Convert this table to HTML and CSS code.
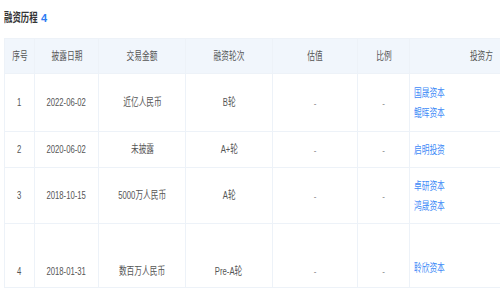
FILE: index.html
```html
<!DOCTYPE html>
<html lang="zh-CN">
  <head>
    <meta charset="UTF-8" />
    <meta name="viewport" content="width=device-width, initial-scale=1.0" />
    <title>融资历程</title>
    <link rel="stylesheet" href="styles.css">
  </head>
  <body>
    <h2 class="section-title">
      <span class="sq sq-left">融资历程</span><span class="count">4</span>
    </h2>

    <table class="finance-table">
      <colgroup>
        <col class="c-no" />
        <col class="c-date" />
        <col class="c-amount" />
        <col class="c-round" />
        <col class="c-value" />
        <col class="c-ratio" />
        <col class="c-investor" />
      </colgroup>
      <thead>
        <tr>
          <th><span class="sq">序号</span></th>
          <th><span class="sq">披露日期</span></th>
          <th><span class="sq">交易金额</span></th>
          <th><span class="sq">融资轮次</span></th>
          <th><span class="sq">估值</span></th>
          <th><span class="sq">比例</span></th>
          <th class="investors-head"><span class="sq sq-right">投资方</span></th>
        </tr>
      </thead>
      <tbody>
        <tr class="row-1">
          <td><span class="sq">1</span></td>
          <td><span class="sq">2022-06-02</span></td>
          <td><span class="sq">近亿人民币</span></td>
          <td><span class="sq">B轮</span></td>
          <td><span class="dot">-</span></td>
          <td><span class="dot">-</span></td>
          <td class="investors">
            <a href="#" class="sq sq-left">国晟资本</a>
            <a href="#" class="sq sq-left">鲲晖资本</a>
          </td>
        </tr>
        <tr class="row-2">
          <td><span class="sq">2</span></td>
          <td><span class="sq">2020-06-02</span></td>
          <td><span class="sq">未披露</span></td>
          <td><span class="sq">A+轮</span></td>
          <td><span class="dot">-</span></td>
          <td><span class="dot">-</span></td>
          <td class="investors">
            <a href="#" class="sq sq-left">启明投资</a>
          </td>
        </tr>
        <tr class="row-3">
          <td><span class="sq">3</span></td>
          <td><span class="sq">2018-10-15</span></td>
          <td><span class="sq">5000万人民币</span></td>
          <td><span class="sq">A轮</span></td>
          <td><span class="dot">-</span></td>
          <td><span class="dot">-</span></td>
          <td class="investors">
            <a href="#" class="sq sq-left">卓研资本</a>
            <a href="#" class="sq sq-left">鸿晟资本</a>
          </td>
        </tr>
        <tr class="row-4">
          <td><span class="sq">4</span></td>
          <td><span class="sq">2018-01-31</span></td>
          <td><span class="sq">数百万人民币</span></td>
          <td><span class="sq">Pre-A轮</span></td>
          <td><span class="dot">-</span></td>
          <td><span class="dot">-</span></td>
          <td class="investors">
            <a href="#" class="sq sq-left">聆欣资本</a>
          </td>
        </tr>
      </tbody>
    </table>
  </body>
</html>
```

FILE: styles.css
```css
* {
  padding: 0;
  margin: 0;
  box-sizing: border-box;
}

body {
  font-family: "Liberation Sans", "Noto Sans CJK SC", sans-serif;
  color: #555;
  background: #fff;
  padding: 11px 0 0 4px;
  overflow: hidden;
}

/* the shot is squeezed sideways, so text is narrowed */
.sq {
  display: inline-block;
  transform: scaleX(0.7);
  transform-origin: center;
  white-space: nowrap;
}

.sq-left {
  transform-origin: left;
}

.sq-right {
  transform-origin: right;
}

.section-title {
  display: flex;
  align-items: center;
  font-size: 12px;
  font-weight: bold;
  color: #333;
  line-height: 14px;
  height: 27px;
  padding-bottom: 13px;
}

.section-title .sq {
  width: 37px;
}

.count {
  color: #2b7bf3;
  font-size: 11px;
}

.finance-table {
  border-collapse: collapse;
  table-layout: fixed;
  width: 496px;
  font-size: 11px;
}

.c-no { width: 30px; }
.c-date { width: 64px; }
.c-amount { width: 87px; }
.c-round { width: 87px; }
.c-value { width: 85px; }
.c-ratio { width: 52px; }
.c-investor { width: 91px; }

.finance-table th,
.finance-table td {
  border: 1px solid #edf2f8;
  text-align: center;
  vertical-align: middle;
  font-weight: normal;
  line-height: 13px;
}

.finance-table th {
  background: #f1f6fc;
  height: 35px;
  color: #555;
}

.finance-table th.investors-head {
  text-align: right;
  padding-right: 8px;
  border-right: none;
}

.row-1 td { height: 58px; }
.row-2 td { height: 36px; }
.row-3 td { height: 56px; }
.row-4 td {
  height: 64px;
  vertical-align: bottom;
  padding-bottom: 9px;
}

.finance-table td:last-child {
  border-right: none;
}

.dot {
  font-size: 8px;
  color: #666;
}

.finance-table td.investors {
  text-align: left;
  padding-left: 4px;
}

.investors a {
  display: block;
  color: #3d8af7;
  text-decoration: none;
  line-height: 20px;
}
```
